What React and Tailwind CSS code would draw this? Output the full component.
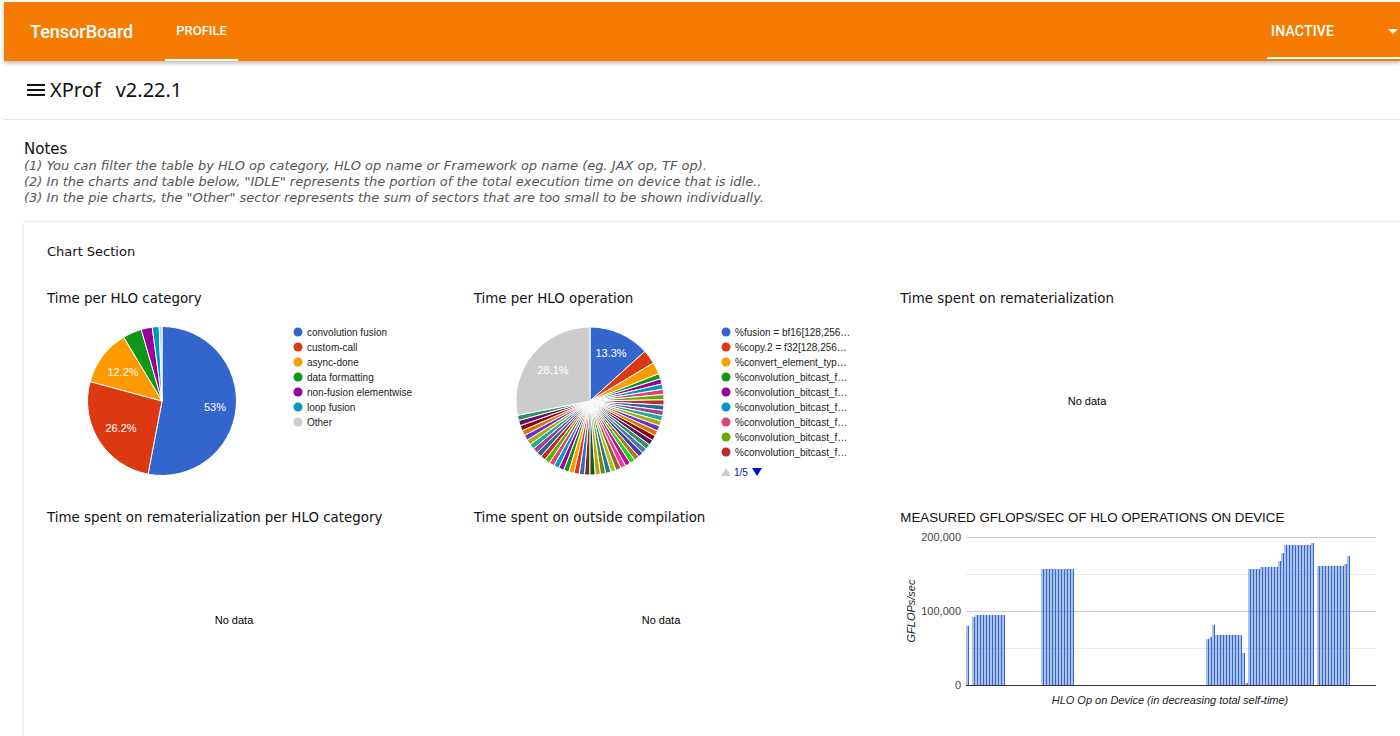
import React from 'react';

const PALETTE = [
  '#3366cc', '#dc3912', '#ff9900', '#109618', '#990099', '#0099c6', '#dd4477', '#66aa00',
  '#b82e2e', '#316395', '#994499', '#22aa99', '#aaaa11', '#6633cc', '#e67300', '#8b0707',
  '#651067', '#329262', '#5574a6', '#3b3eac', '#b77322', '#16d620', '#b91383', '#f4359e',
  '#9c5935', '#a9c413', '#2a778d', '#668d1c', '#bea413', '#0c5922', '#743411',
];

const CHART_FONT = 'Liberation Sans, Arial, sans-serif';

// a0/a1 are fractions of the full turn, clockwise from 12 o'clock
function slicePath(cx, cy, r, a0, a1) {
  const p = (a) => {
    const t = a * 2 * Math.PI - Math.PI / 2;
    return [cx + r * Math.cos(t), cy + r * Math.sin(t)];
  };
  const [x0, y0] = p(a0);
  const [x1, y1] = p(a1);
  const large = a1 - a0 > 0.5 ? 1 : 0;
  return `M${cx},${cy} L${x0},${y0} A${r},${r} 0 ${large} 1 ${x1},${y1} Z`;
}

function Pie({ cx, cy, r, slices }) {
  let acc = 0;
  return (
    <g>
      {slices.map((s, i) => {
        const a0 = acc;
        acc += s.v / 100;
        return <path key={i} d={slicePath(cx, cy, r, a0, acc)} fill={s.c} stroke="#fff" strokeWidth="1" />;
      })}
    </g>
  );
}

const categorySlices = [
  { v: 53, c: '#3366cc' },
  { v: 26.2, c: '#dc3912' },
  { v: 12.2, c: '#ff9900' },
  { v: 4.1, c: '#109618' },
  { v: 2.4, c: '#990099' },
  { v: 1.5, c: '#0099c6' },
  { v: 0.6, c: '#cccccc' },
];

const categoryLegend = [
  ['convolution fusion', '#3366cc'],
  ['custom-call', '#dc3912'],
  ['async-done', '#ff9900'],
  ['data formatting', '#109618'],
  ['non-fusion elementwise', '#990099'],
  ['loop fusion', '#0099c6'],
  ['Other', '#cccccc'],
];

function opSlices() {
  const out = [{ v: 13.3, c: PALETTE[0] }, { v: 3.1, c: PALETTE[1] }, { v: 2.6, c: PALETTE[2] }];
  const rest = 100 - 13.3 - 3.1 - 2.6 - 28.1;
  const n = 46;
  for (let i = 0; i < n; i++) {
    out.push({ v: rest / n, c: PALETTE[(i + 3) % PALETTE.length] });
  }
  out.push({ v: 28.1, c: '#cccccc' });
  return out;
}

const opLegend = [
  ['%fusion = bf16[128,256…', '#3366cc'],
  ['%copy.2 = f32[128,256…', '#dc3912'],
  ['%convert_element_typ…', '#ff9900'],
  ['%convolution_bitcast_f…', '#109618'],
  ['%convolution_bitcast_f…', '#990099'],
  ['%convolution_bitcast_f…', '#0099c6'],
  ['%convolution_bitcast_f…', '#dd4477'],
  ['%convolution_bitcast_f…', '#66aa00'],
  ['%convolution_bitcast_f…', '#b82e2e'],
];

function Legend({ items, x, y }) {
  return (
    <g fontFamily={CHART_FONT} fontSize="10" fill="#222">
      {items.map(([label, c], i) => (
        <g key={i}>
          <circle cx={x} cy={y + i * 15} r="4.5" fill={c} />
          <text x={x + 9} y={y + i * 15 + 3.5}>{label}</text>
        </g>
      ))}
    </g>
  );
}

function PieLabel({ x, y, children }) {
  return (
    <text x={x} y={y} textAnchor="middle" fontFamily={CHART_FONT} fontSize="11" fill="#fff">
      {children}
    </text>
  );
}

function CategoryChart() {
  return (
    <svg width="426" height="200" className="-mt-[1px]">
      <Pie cx={115} cy={93} r={74.5} slices={categorySlices} />
      <PieLabel x={168} y={103}>53%</PieLabel>
      <PieLabel x={74} y={124}>26.2%</PieLabel>
      <PieLabel x={76} y={68}>12.2%</PieLabel>
      <Legend items={categoryLegend} x={251} y={24} />
    </svg>
  );
}

function OperationChart() {
  return (
    <svg width="426" height="200" className="-mt-[1px]">
      <Pie cx={116} cy={93} r={74} slices={opSlices()} />
      <PieLabel x={137} y={49}>13.3%</PieLabel>
      <PieLabel x={79} y={66}>28.1%</PieLabel>
      <Legend items={opLegend} x={252} y={24} />
      <polygon points="247,168 252,160 257,168" fill="#cccccc" />
      <text x={260} y={168} fontFamily={CHART_FONT} fontSize="10" fill="#0011cc">1/5</text>
      <polygon points="278,160 288,160 283,168" fill="#0011cc" />
    </svg>
  );
}

function NoData() {
  return (
    <svg width="426" height="200" className="-mt-[1px]">
      <text x={187} y={97} textAnchor="middle" fontFamily={CHART_FONT} fontSize="11" fill="#000">No data</text>
    </svg>
  );
}

// value (thousands of GFLOPs/sec) of the bar drawn at page x
function gflops(x) {
  if (x <= 967) return 80;
  if (x >= 972 && x <= 1003) return x < 974 ? 92 : 94;
  if (x >= 1040 && x <= 1072) return 157;
  if (x >= 1205 && x <= 1240) {
    if (x < 1208) return 62;
    if (x < 1211) return 65;
    if (x < 1214) return 81;
    return 68;
  }
  if (x >= 1241 && x <= 1243) return 43;
  if (x >= 1244 && x <= 1246) return 3;
  if (x >= 1247 && x <= 1276) return x < 1260 ? 157 : 159;
  if (x >= 1277 && x <= 1279) return 168;
  if (x >= 1280 && x <= 1282) return 179;
  if (x >= 1283 && x <= 1309) return 189;
  if (x >= 1310 && x <= 1312) return 192;
  if (x >= 1315 && x <= 1343) return 161;
  if (x >= 1344 && x <= 1346) return 163;
  if (x >= 1347 && x <= 1349) return 174;
  return 0;
}

function GflopsChart() {
  const bars = [];
  for (let px = 966; px <= 1350; px += 3) {
    const v = gflops(px);
    if (v > 0) bars.push({ x: px - 900, v });
  }
  const base = 158;
  const k = 0.74;
  return (
    <svg width="500" height="200" className="-mt-[1px]">
      <line x1="66" x2="476" y1="47.5" y2="47.5" stroke="#ebebeb" />
      <line x1="66" x2="476" y1="121.5" y2="121.5" stroke="#ebebeb" />
      <line x1="66" x2="476" y1="10.5" y2="10.5" stroke="#cccccc" />
      <line x1="66" x2="476" y1="84.5" y2="84.5" stroke="#cccccc" />
      {bars.map((b, i) => {
        const h = Math.round(b.v * k);
        return (
          <g key={i} shapeRendering="crispEdges">
            <rect x={b.x} y={base - h} width="2" height={h} fill="#3366cc" fillOpacity="0.4" />
            <rect x={b.x + 2} y={base - h} width="1" height={h} fill="#3366cc" />
          </g>
        );
      })}
      <line x1="66" x2="476" y1="158.5" y2="158.5" stroke="#333" />
      <g fontFamily={CHART_FONT} fontSize="11" fill="#444" textAnchor="end">
        <text x="61" y="14">200,000</text>
        <text x="61" y="88">100,000</text>
        <text x="61" y="162">0</text>
      </g>
      <text
        x="15"
        y="84"
        transform="rotate(-90 15 84)"
        textAnchor="middle"
        fontFamily={CHART_FONT}
        fontSize="11"
        fontStyle="italic"
        fill="#222"
      >
        GFLOPs/sec
      </text>
      <text x="270" y="177" textAnchor="middle" fontFamily={CHART_FONT} fontSize="11" fontStyle="italic" fill="#222">
        HLO Op on Device (in decreasing total self-time)
      </text>
    </svg>
  );
}

function ChartCell({ title, titleClass, children }) {
  return (
    <div className="flex flex-col">
      <div className={titleClass || "h-[20px] flex items-center whitespace-nowrap text-[13.4px] text-[#111] font-['DejaVu_Sans',sans-serif]"}>
        {title}
      </div>
      {children}
    </div>
  );
}

export default function App() {
  return (
    <div className="w-[1400px] h-[736px] overflow-hidden bg-white pl-[4px] pt-[2px]">
      {/* top bar */}
      <div className="relative z-10 h-[59px] bg-[#f57c00] flex items-stretch text-white font-['Roboto',sans-serif] shadow-[0_2px_4px_rgba(0,0,0,0.28)]">
        <div className="ml-[26px] flex items-center text-[18px] font-medium">TensorBoard</div>
        <div className="ml-[32px] px-[11px] flex items-center text-[13px] font-medium border-b-2 border-white">PROFILE</div>
        <div className="ml-auto w-[133px] h-[57px] pt-[20px] pl-[4px] flex items-start border-b-2 border-white">
          <span className="text-[14px] leading-[18px] font-medium tracking-[0.2px]">INACTIVE</span>
          <span className="ml-auto mr-[2px] mt-[7px] w-0 h-0 border-l-[5px] border-r-[5px] border-t-[5px] border-l-transparent border-r-transparent border-t-white" />
        </div>
      </div>

      {/* app title */}
      <div className="h-[59px] flex items-center border-b border-[#e3e3e3] pl-[23px] text-[#111]">
        <svg width="18" height="14" viewBox="0 0 18 14" className="mr-[5px]">
          <rect x="0" y="1" width="18" height="2" fill="#111" />
          <rect x="0" y="6" width="18" height="2" fill="#111" />
          <rect x="0" y="11" width="18" height="2" fill="#111" />
        </svg>
        <span className="text-[20px] font-['Noto_Sans',sans-serif]">XProf</span>
        <span className="text-[20px] ml-[15px] font-['Noto_Sans',sans-serif]">v2.22.1</span>
      </div>

      {/* notes */}
      <div className="pl-[20px] pt-[20px] font-['DejaVu_Sans',sans-serif]">
        <div className="text-[15px] leading-[18px] text-[#111]">Notes</div>
        <div className="text-[13px] leading-[16px] italic text-[#555]">
          <div>(1) You can filter the table by HLO op category, HLO op name or Framework op name (eg. JAX op, TF op).</div>
          <div>(2) In the charts and table below, "IDLE" represents the portion of the total execution time on device that is idle..</div>
          <div>(3) In the pie charts, the "Other" sector represents the sum of sectors that are too small to be shown individually.</div>
        </div>
      </div>

      {/* chart section card */}
      <div className="ml-[20px] mt-[16px] w-[1420px] h-[600px] bg-white rounded-[2px] shadow-[0_0_3px_rgba(0,0,0,0.2)] pl-[23px] pt-[20px]">
        <div className="h-[20px] flex items-center text-[13px] text-[#111] font-['DejaVu_Sans',sans-serif]">
          Chart Section
        </div>
        <div className="mt-[27px] w-[1280px] grid grid-cols-3">
          <ChartCell title="Time per HLO category"><CategoryChart /></ChartCell>
          <ChartCell title="Time per HLO operation"><OperationChart /></ChartCell>
          <ChartCell title="Time spent on rematerialization"><NoData /></ChartCell>
          <ChartCell title="Time spent on rematerialization per HLO category"><NoData /></ChartCell>
          <ChartCell title="Time spent on outside compilation"><NoData /></ChartCell>
          <ChartCell
            title="MEASURED GFLOPS/SEC OF HLO OPERATIONS ON DEVICE"
            titleClass="h-[20px] flex items-center text-[13.3px] text-[#111] font-['Liberation_Sans',Arial,sans-serif] whitespace-nowrap"
          >
            <GflopsChart />
          </ChartCell>
        </div>
      </div>
    </div>
  );
}
